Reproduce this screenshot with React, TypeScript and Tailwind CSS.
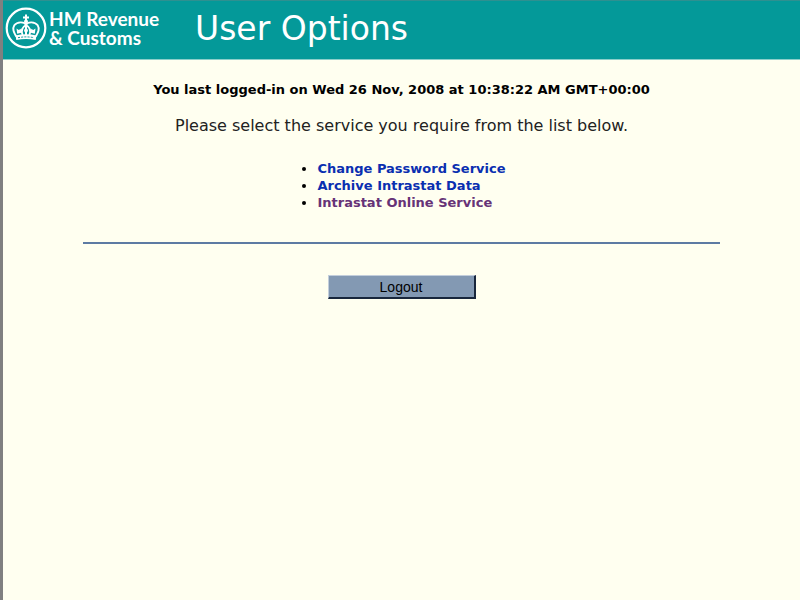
import React from "react";

const services = [
  { name: "Change Password Service", visited: false },
  { name: "Archive Intrastat Data", visited: false },
  { name: "Intrastat Online Service", visited: true },
];

function CrownLogo() {
  return (
    <svg viewBox="0 0 42 42" className="size-[42px] shrink-0" fill="none" stroke="white" aria-hidden="true">
      <circle cx="21" cy="21" r="19.300" strokeWidth="2.200" />
      <g fill="white" stroke="none">
        <path d="M20 7.500h2v2h2v2h-2v2h-2v-2h-2v-2h2z" />
        <circle cx="21" cy="14.500" r="2" />
        <circle cx="21" cy="23.500" r="1.900" />
        <path d="M20 20h2v8h-2z" />
        <path d="M11.500 21.500l2.300 1.500 2-1.300.4 4-4 1zM30.500 21.500l-2.300 1.500-2-1.300-.4 4 4 1z" />
        <path d="M10.500 28.500q10.500-2.600 21 0l-.8 4.500q-9.700-2-19.400 0z" />
      </g>
      <path
        d="M11.200 29.500C9 25.500 7 22 9.300 18.300c2.700-3.800 10.200-4 11.700-.3V14M30.800 29.500c2.200-4 4.200-7.500 1.900-11.200-2.700-3.800-10.200-4-11.700-.3M17.600 28c-1.600-4-1.200-7.500 3.400-10M24.400 28c1.600-4 1.200-7.500-3.400-10"
        strokeWidth="1.900"
      />
      <path d="M13 30.700q8-1.600 16 0" stroke="#049999" strokeWidth="1" strokeDasharray="2 1.200" />
    </svg>
  );
}

export default function App() {
  return (
    <div className="min-h-screen border-l-[3px] border-[#808080] bg-[#fffff0] font-['DejaVu_Sans',Verdana,sans-serif] text-black">
      <header className="flex h-[60px] items-start border-t border-b border-t-[#2f9090] border-b-[#8ccfca] bg-[#049999] pl-0.5 text-white">
        <div className="flex w-[190px] items-start gap-0.5 pt-1.5">
          <CrownLogo />
          <div className="pt-0.5 font-['Lato','Open_Sans',sans-serif] text-[19px] leading-[19px] font-bold whitespace-nowrap">
            <span className="block">HM Revenue</span>
            <span className="block">&amp; Customs</span>
          </div>
        </div>
        <h1 className="pt-2 text-[33px] leading-10 whitespace-nowrap">User Options</h1>
      </header>

      <main className="flex flex-col items-center pt-5">
        <p className="text-[13px] leading-5 font-bold">
          You last logged-in on Wed 26 Nov, 2008 at 10:38:22 AM GMT+00:00
        </p>
        <p className="mt-4 text-base leading-5 text-[#222222]">
          Please select the service you require from the list below.
        </p>
        <ul className="mt-6 list-disc pl-5 text-[13px] leading-[17px] font-bold">
          {services.map((s) => (
            <li key={s.name}>
              <a href="#" className={s.visited ? "text-[#663377]" : "text-[#0a2fb0]"}>
                {s.name}
              </a>
            </li>
          ))}
        </ul>
        <hr className="mt-[31px] w-4/5 border-t-2 border-[#5d7ba3]" />
        <button
          type="button"
          className="mt-[31px] h-6 w-[148px] border-t border-r-2 border-b-2 border-l border-t-[#c3cedb] border-r-[#18263c] border-b-[#18263c] border-l-[#c3cedb] bg-[#8399b3] font-['Liberation_Sans',Arial,sans-serif] text-sm leading-5"
        >
          Logout
        </button>
      </main>
    </div>
  );
}
